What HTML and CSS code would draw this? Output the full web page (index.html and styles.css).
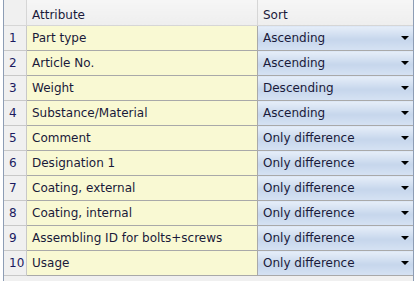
FILE: index.html
```html
<!DOCTYPE html>
<html lang="en">
<head>
  <meta charset="UTF-8">
  <title>Sort attributes</title>
  <link rel="stylesheet" href="styles.css">
</head>
<body>
  <div class="grid">
    <table>
      <thead>
        <tr>
          <th class="num"></th>
          <th class="attr">Attribute</th>
          <th class="sort">Sort</th>
        </tr>
      </thead>
      <tbody>
        <tr><td class="num">1</td><td class="attr">Part type</td><td class="sort"><span>Ascending</span><i class="arrow"></i></td></tr>
        <tr><td class="num">2</td><td class="attr">Article No.</td><td class="sort"><span>Ascending</span><i class="arrow"></i></td></tr>
        <tr><td class="num">3</td><td class="attr">Weight</td><td class="sort"><span>Descending</span><i class="arrow"></i></td></tr>
        <tr><td class="num">4</td><td class="attr">Substance/Material</td><td class="sort"><span>Ascending</span><i class="arrow"></i></td></tr>
        <tr><td class="num">5</td><td class="attr">Comment</td><td class="sort"><span>Only difference</span><i class="arrow"></i></td></tr>
        <tr><td class="num">6</td><td class="attr">Designation 1</td><td class="sort"><span>Only difference</span><i class="arrow"></i></td></tr>
        <tr><td class="num">7</td><td class="attr">Coating, external</td><td class="sort"><span>Only difference</span><i class="arrow"></i></td></tr>
        <tr><td class="num">8</td><td class="attr">Coating, internal</td><td class="sort"><span>Only difference</span><i class="arrow"></i></td></tr>
        <tr><td class="num">9</td><td class="attr">Assembling ID for bolts+screws</td><td class="sort"><span>Only difference</span><i class="arrow"></i></td></tr>
        <tr><td class="num">10</td><td class="attr">Usage</td><td class="sort"><span>Only difference</span><i class="arrow"></i></td></tr>
      </tbody>
    </table>
  </div>
</body>
</html>
```

FILE: styles.css
```css
body {
  margin: 0;
  background-color: #fff;
  font-family: "DejaVu Sans", sans-serif;
  font-size: 12px;
  color: #1a1a3a;
}
.grid {
  margin-left: 3px;
  width: 411px;
  height: 281px;
  border-left: 1px solid #8d9db5;
  border-right: 1px solid #8d9db5;
  background-color: #f0f0f0;
  box-sizing: border-box;
}
table {
  border-collapse: collapse;
  width: 100%;
  table-layout: fixed;
}
th, td {
  height: 24px;
  padding: 0 0 0 5px;
  text-align: left;
  font-weight: normal;
  white-space: nowrap;
  overflow: hidden;
}
th {
  height: 21px;
  padding-top: 4px;
  background: linear-gradient(#f6f6f6, #eeeeee);
  border-right: 1px solid #d6d6d6;
  border-bottom: 1px solid #d6d6d6;
}
th.num {
  width: 17px;
  background: #f0f0f0;
}
th.attr {
  width: 225px;
}
th.sort {
  border-right: none;
}
td {
  border: 1px solid #a9a9a9;
}
td.num {
  background-color: #f0f0f0;
  border-left: none;
  border-color: #c8c8c8;
  color: #1a1a60;
}
td.attr {
  background-color: #f9f9d3;
}
td.sort {
  background: linear-gradient(#e6eef9, #c6d6ec 55%, #d6e2f3);
  border-right: none;
  padding-right: 4px;
}
td.sort span {
  display: inline-block;
  width: 120px;
}
.arrow {
  float: right;
  margin-top: 5px;
  width: 0;
  height: 0;
  border-left: 4px solid transparent;
  border-right: 4px solid transparent;
  border-top: 4px solid #000;
}
```
